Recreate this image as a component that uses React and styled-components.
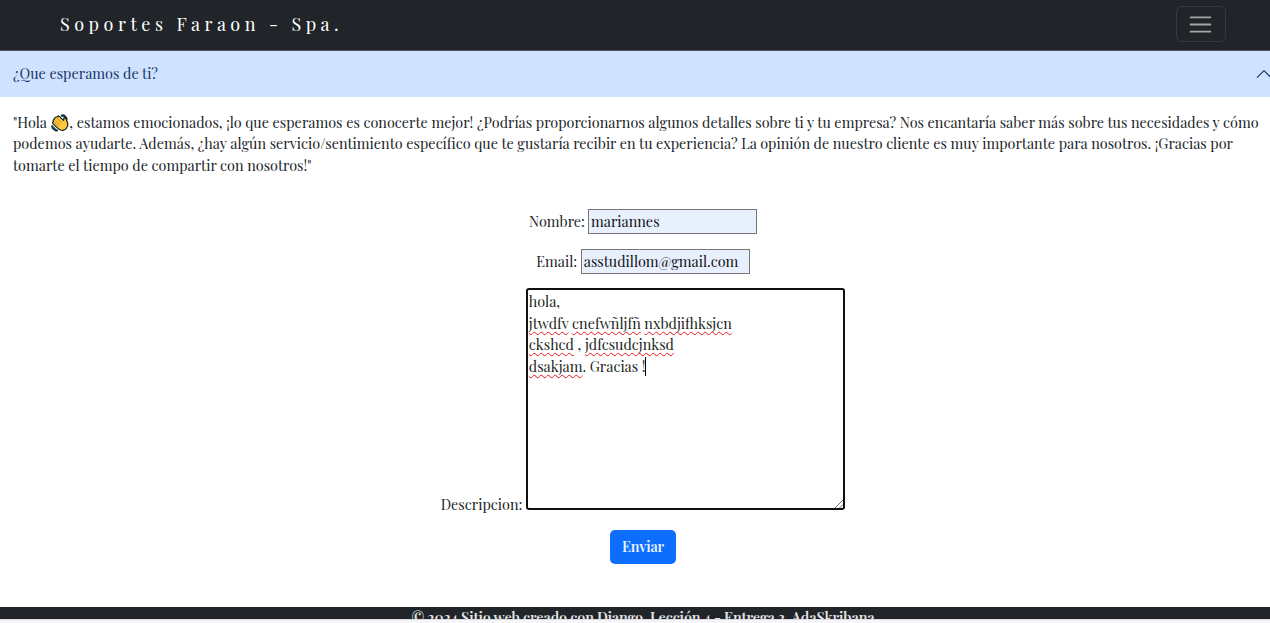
import React from 'react';
import styled, { createGlobalStyle } from 'styled-components';

const GlobalStyle = createGlobalStyle`
  *, *::before, *::after { box-sizing: border-box; }
  body {
    margin: 0;
    overflow: hidden;
    background: #fff;
    color: #212529;
    font-family: "Playfair Display", "Liberation Serif", serif;
    font-size: 14.4px;
    line-height: 21.6px;
  }
`;

const Page = styled.div`
  width: 1286px;
  height: 623px;
  display: flex;
  flex-direction: column;
  overflow: hidden;
`;

const Navbar = styled.nav`
  display: flex;
  justify-content: space-between;
  align-items: center;
  height: 51px;
  padding: 0 60px 3px;
  background: #212529;
  border-bottom: 1px solid #4d5866;
`;

const Brand = styled.span`
  color: #fff;
  font-size: 18px;
  line-height: 30px;
  letter-spacing: 4.5px;
  white-space: pre;
`;

const Toggler = styled.button`
  display: flex;
  align-items: center;
  justify-content: center;
  width: 50px;
  height: 36px;
  padding: 0 1px 0 0;
  background: transparent;
  border: 1px solid #373b3f;
  border-radius: 6px;
  margin-top: 1px;
`;

const AccordionHeader = styled.div`
  display: flex;
  justify-content: space-between;
  align-items: center;
  height: 46px;
  padding: 0 13px;
  background: #cfe2ff;
  color: #17346b;
`;

const AccordionBody = styled.div`
  padding: 14.7px 27px 0 13px;
  height: 112px;
`;

const Line = styled.div`
  white-space: pre;
`;

const Emoji = styled.svg`
  width: 18px;
  height: 18px;
  margin: 0 0 0 1px;
  vertical-align: -4px;
`;

const Form = styled.form`
  display: flex;
  flex-direction: column;
  align-items: center;
`;

const Field = styled.label`
  display: flex;
  align-items: ${(p) => p.$align || 'center'};
  gap: ${(p) => p.$gap || 3}px;
  margin-bottom: ${(p) => p.$bottom || 15}px;
`;

const Input = styled.input`
  width: 169px;
  height: 25px;
  padding: 0 2px 2px;
  border: 1px solid #767676;
  border-radius: 0;
  outline: none;
  background: #e8f0fe;
  color: #101214;
  font: inherit;
`;

const TextBox = styled.div`
  position: relative;
  width: 319px;
  height: 222px;
  padding: 1px 0.5px;
  border: 2px solid #101010;
  border-radius: 3px;
  color: #1b1f23;
  white-space: pre;
  outline: none;
`;

const Misspelled = styled.span`
  text-decoration: underline wavy #e5181c 1.2px;
  text-decoration-skip-ink: none;
  text-underline-offset: 2px;
`;

const Caret = styled.span`
  display: inline-block;
  width: 1px;
  height: 19px;
  margin-left: -1px;
  vertical-align: -4px;
  background: #000;
`;

const Grip = styled.svg`
  position: absolute;
  right: 0;
  bottom: 0;
  width: 8px;
  height: 8px;
`;

const DescriptionLabel = styled.span`
  line-height: 12px;
`;

const Submit = styled.button`
  width: 66px;
  height: 34px;
  padding: 0 0 2px;
  border: 0;
  border-radius: 5px;
  background: #0d6efd;
  color: #e9f3ff;
  font: 600 14.4px "Playfair Display", "Liberation Serif", serif;
  letter-spacing: -0.2px;
`;

const Footer = styled.footer`
  height: 12px;
  margin-top: auto;
  overflow: hidden;
  background: #212529;
  color: #e4e6e8;
  font-weight: 600;
  letter-spacing: -0.13px;
  text-align: center;
  white-space: pre;
`;

const BottomEdge = styled.div`
  height: 4px;
  background: linear-gradient(#dcdbe0 0 1px, #f6f5f7 1px);
`;

const WavingHand = () => (
  <Emoji viewBox="0 0 18 18" aria-label="hola">
    <path d="M10 2.2Q11 .3 13 1.2L15.2 3.4 16.3 5.5M1.3 11.2Q.6 13.2 2 14.8L4.8 16.7 7 16.5" fill="#176b78" stroke="#12252c" strokeWidth="1.4" />
    <path d="M2.2 6.2 3.4 5 4.1 3.5 5.6 3 7.3 1.9 9 3.1 12.5 6.4 13.1 4.1Q14.8 3.2 15.2 5.4L16.8 9.2Q17.2 12.4 15.2 14.6 12.4 17.2 9.4 16 7.4 15.1 2.2 9.8 1.1 8.6 2.2 8Z" fill="#ffc83d" stroke="#171b1d" strokeWidth="1.2" strokeLinejoin="round" />
    <path d="m3.6 5.5 5.4 5.3M5.5 3.7l5.3 5.2M3.3 8.2l4.3 4.2" fill="none" stroke="#9c741b" strokeWidth=".7" />
  </Emoji>
);

export default function App() {
  return (
    <>
      <GlobalStyle />
      <Page>
        <Navbar>
          <Brand>Soportes Faraon - Spa.</Brand>
          <Toggler type="button" aria-label="Menú">
            <svg width="27" height="27" viewBox="0 0 30 30">
              <path d="M4 7h22M4 15h22M4 23h22" stroke="#a3a5a7" strokeWidth="2" strokeLinecap="round" />
            </svg>
          </Toggler>
        </Navbar>

        <AccordionHeader>
          <span>¿Que esperamos de ti?</span>
          <svg width="18" height="18" viewBox="0 0 16 16">
            <path d="m2 11 6-6 6 6" fill="none" stroke="#17346b" strokeLinecap="round" strokeLinejoin="round" />
          </svg>
        </AccordionHeader>
        <AccordionBody>
          <Line>
            "Hola <WavingHand />, estamos emocionados, ¡lo que esperamos es conocerte mejor! ¿Podrías proporcionarnos algunos detalles sobre ti y tu empresa? Nos encantaría saber más sobre tus necesidades y cómo
          </Line>
          <Line>podemos ayudarte. Además, ¿hay algún servicio/sentimiento específico que te gustaría recibir en tu experiencia? La opinión de nuestro cliente es muy importante para nosotros. ¡Gracias por</Line>
          <Line>tomarte el tiempo de compartir con nosotros!"</Line>
        </AccordionBody>

        <Form>
          <Field>
            Nombre:
            <Input defaultValue="mariannes" />
          </Field>
          <Field $bottom={14} $gap={3.6}>
            Email:
            <Input defaultValue="asstudillom@gmail.com" />
          </Field>
          <Field $align="flex-end" $bottom={20} $gap={4}>
            <DescriptionLabel>Descripcion:</DescriptionLabel>
            <TextBox role="textbox" aria-multiline="true">
              <div>hola,</div>
              <div>
                <Misspelled>jtwdfv</Misspelled> <Misspelled>cnefwñljfñ</Misspelled> <Misspelled>nxbdjifhksjcn</Misspelled>
              </div>
              <div>
                <Misspelled>ckshcd</Misspelled> , <Misspelled>jdfcsudcjnksd</Misspelled>
              </div>
              <div>
                <Misspelled>dsakjam</Misspelled>. Gracias !<Caret />
              </div>
              <Grip viewBox="0 0 9 9">
                <path d="M0 9 9 0M5 9l4-4" stroke="#555" strokeWidth="1" />
              </Grip>
            </TextBox>
          </Field>
          <Submit type="button">Enviar</Submit>
        </Form>

        <Footer>© 2024 Sitio web creado con Django. Lección 4 - Entrega 2. AdaSkribana</Footer>
        <BottomEdge />
      </Page>
    </>
  );
}
